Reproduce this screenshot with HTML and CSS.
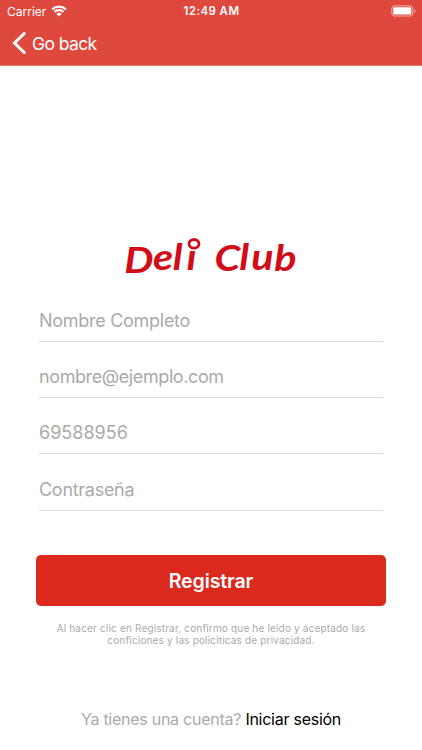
FILE: index.html
```html
<!DOCTYPE html>
<html lang="es">
<head>
<meta charset="UTF-8">
<meta name="viewport" content="width=device-width, initial-scale=1.0">
<title>Deli Club</title>
<link rel="stylesheet" href="styles.css">
</head>
<body>
  <header>
    <div class="status-bar">
      <div class="carrier">
        <span>Carrier</span>
        <svg class="wifi" width="16" height="12" viewBox="0 0 16 12">
          <path d="M1.2 4.4a9.8 9.8 0 0 1 13.6 0M3.6 6.9a6.4 6.4 0 0 1 8.8 0" fill="none" stroke="#fff" stroke-width="2.2"/>
          <path d="M5.4 8.9a3.8 3.8 0 0 1 5.2 0L8 11.5z" fill="#fff"/>
        </svg>
      </div>
      <div class="time">12:49 AM</div>
      <div class="battery">
        <svg width="26" height="12" viewBox="0 0 26 12">
          <rect x="1.8" y="0.8" width="21" height="10.2" rx="2.8" fill="none" stroke="#fff" stroke-opacity="0.55"/>
          <rect x="3.3" y="2.2" width="18" height="7.4" rx="1.4" fill="#fff"/>
          <path d="M24.5 4v4c1.3-.5 1.3-3.5 0-4z" fill="#fff" fill-opacity="0.6"/>
        </svg>
      </div>
    </div>
    <a class="back" href="#">
      <svg width="14" height="22" viewBox="0 0 14 22">
        <path d="M12.2 1.5L2.5 11L12.2 20.5" fill="none" stroke="#fff" stroke-width="3" stroke-linecap="round" stroke-linejoin="miter"/>
      </svg>
      <span>Go back</span>
    </a>
  </header>

  <main>
    <svg class="logo" width="184" height="46" viewBox="0 0 184 46">
      <text transform="scale(1.15 1)" x="4.5 29.6 46.8 58.6 70 83 104.5 115 135" y="39.5 36.5 36.5 36.5 36.5 37.5 36.5 36.5 37">Deli Club</text>
      <ellipse class="dot" cx="75" cy="9.8" rx="5" ry="4.3"/>
    </svg>

    <form id="registerForm">
      <input type="text" name="name" placeholder="Nombre Completo">
      <input type="email" name="email" placeholder="nombre@ejemplo.com">
      <input type="tel" name="phone" placeholder="69588956">
      <input type="password" name="password" placeholder="Contraseña">
      <button type="submit">Registrar</button>
    </form>

    <p class="terms">Al hacer clic en Registrar, confirmo que he leído y aceptado las<br>conficiones y las policiticas de privacidad.</p>
    <p class="login">Ya tienes una cuenta? <a href="#">Iniciar sesión</a></p>
  </main>
</body>
</html>
```

FILE: styles.css
```css
body {
  margin: 0;
  height: 750px;
  overflow: hidden;
  font-family: Inter, "Liberation Sans", sans-serif;
  background-color: #fff;
}

header {
  height: 65px;
  background-color: #df493d;
  border-bottom: 1px solid #e77a72;
  color: #fff;
}

.status-bar {
  display: grid;
  grid-template-columns: 1fr auto 1fr;
  align-items: center;
  height: 22px;
  padding: 0 6px 0 7px;
  font-size: 12px;
}

.carrier {
  display: flex;
  align-items: center;
  gap: 5px;
}

.time {
  font-size: 11.5px;
  font-weight: 600;
  letter-spacing: 0.4px;
}

.battery {
  display: flex;
  justify-content: flex-end;
}

.back {
  display: inline-flex;
  align-items: center;
  gap: 6px;
  height: 42px;
  padding-left: 12px;
  color: #fff;
  font-size: 17.5px;
  letter-spacing: -0.6px;
  text-decoration: none;
}

main {
  display: flex;
  flex-direction: column;
  align-items: center;
}

.logo {
  margin-top: 168px;
}

.logo text {
  font-family: Lato, "Liberation Sans", cursive;
  font-size: 36px;
  font-style: italic;
  font-weight: 700;
  fill: #d20d18;
}

.logo .dot {
  fill: #fff;
  stroke: #d20d18;
  stroke-width: 2.8;
}

form {
  display: flex;
  flex-direction: column;
  width: 350px;
  margin-top: 18px;
}

form input {
  box-sizing: border-box;
  height: 44px;
  margin: 0 3px 12.2px;
  padding: 2px 0 0;
  border: none;
  border-bottom: 1px solid #dedede;
  border-radius: 0;
  background: none;
  font-family: inherit;
  font-size: 18px;
  letter-spacing: -0.28px;
}

form input[type="email"] {
  letter-spacing: -0.4px;
}

form input[type="tel"] {
  letter-spacing: 0;
}

form input::placeholder {
  color: #aaa;
}

form button {
  height: 51px;
  margin-top: 32.6px;
  border: none;
  border-radius: 5px;
  background-color: #dc291e;
  color: #fff;
  font-family: inherit;
  font-size: 19.5px;
  font-weight: 600;
  letter-spacing: -0.1px;
}

.terms {
  margin: 15.6px 0 0;
  color: #aaa;
  font-size: 10px;
  line-height: 12px;
  letter-spacing: 0.17px;
  text-align: center;
}

.login {
  margin: 63px 0 0;
  color: #aaa;
  font-size: 16px;
  line-height: 20px;
  letter-spacing: -0.26px;
}

.login a {
  color: #000;
  text-decoration: none;
}
```
